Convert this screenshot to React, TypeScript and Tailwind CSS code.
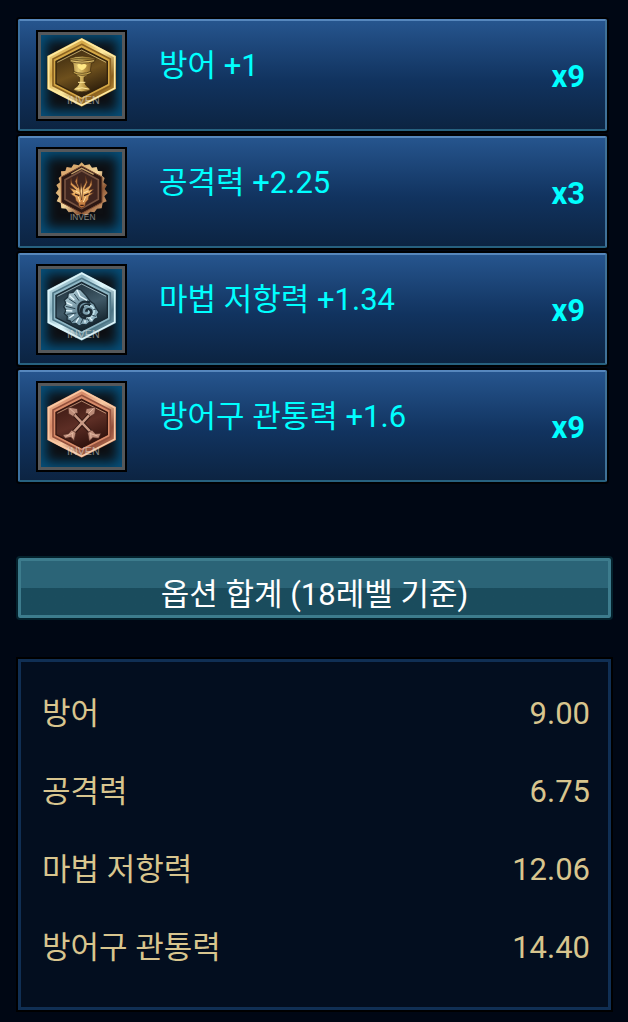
import type { ReactNode } from "react";

type RuneKind = "goblet" | "dragon" | "shell" | "arrows";

interface Rune {
  kind: RuneKind;
  label: string;
  count: number;
}

const RUNES: Rune[] = [
  { kind: "goblet", label: "방어 +1", count: 9 },
  { kind: "dragon", label: "공격력 +2.25", count: 3 },
  { kind: "shell", label: "마법 저항력 +1.34", count: 9 },
  { kind: "arrows", label: "방어구 관통력 +1.6", count: 9 },
];

const TOTALS = [
  { name: "방어", value: "9.00" },
  { name: "공격력", value: "6.75" },
  { name: "마법 저항력", value: "12.06" },
  { name: "방어구 관통력", value: "14.40" },
];

interface HexProps {
  id: string;
  light: string;
  mid: string;
  dark: string;
  core: string;
  coreDark: string;
  children: ReactNode;
}

function Hex({ id, light, mid, dark, core, coreDark, children }: HexProps) {
  return (
    <>
      <defs>
        <linearGradient id={`${id}-rim`} x1="0" y1="0" x2="1" y2="1">
          <stop offset="0" stopColor={light} />
          <stop offset="0.3" stopColor={mid} />
          <stop offset="0.5" stopColor={light} />
          <stop offset="0.75" stopColor={dark} />
          <stop offset="1" stopColor={mid} />
        </linearGradient>
        <linearGradient id={`${id}-core`} x1="0" y1="0" x2="0.4" y2="1">
          <stop offset="0" stopColor={coreDark} />
          <stop offset="0.6" stopColor={core} />
          <stop offset="1" stopColor={coreDark} />
        </linearGradient>
      </defs>
      <path d="M215 84 318 138V237L215 290 112 237V138Z" fill={`url(#${id}-rim)`} />
      <path d="M215 88 314 140V235L215 286 116 235V140Z" fill="none" stroke={light} strokeWidth="5" />
      <path d="M215 103 301 147V227L215 271 129 227V147Z" fill={mid} stroke={dark} strokeWidth="5" />
      <path d="M215 115 292 154V221L215 260 138 221V154Z" fill={`url(#${id}-core)`} stroke={coreDark} strokeWidth="4" />
      <path d="M142 157 215 120 288 157" fill="none" stroke={light} strokeWidth="3" opacity="0.6" />
      {children}
    </>
  );
}

function Goblet() {
  return (
    <Hex id="goblet" light="#ffeaa0" mid="#d5a846" dark="#8b6221" core="#6e501d" coreDark="#33230d">
      <defs>
        <linearGradient id="goblet-cup" x1="0" x2="1">
          <stop offset="0" stopColor="#9b7934" />
          <stop offset="0.35" stopColor="#e5ca74" />
          <stop offset="0.6" stopColor="#ba9543" />
          <stop offset="1" stopColor="#715121" />
        </linearGradient>
      </defs>
      <g fill="url(#goblet-cup)" stroke="#3c290c" strokeWidth="2">
        <path d="M178 145Q216 132 257 145L253 156 244 160 241 183Q236 198 222 202V214Q225 228 239 235L241 241Q216 250 190 241L193 235Q207 229 209 214V202Q197 198 192 184L189 160 180 155Z" />
        <path d="M181 149Q216 158 254 149L253 155Q216 164 181 155Z" fill="#dfc16b" />
        <path d="M190 184Q216 196 243 184V190Q216 202 190 190Z" fill="#cfae54" />
      </g>
      <path d="M185 146Q216 139 250 146Q216 151 185 146Z" fill="#776329" />
      <path d="M215 165Q206 159 202 166Q204 176 215 181Q228 177 230 166Q223 159 215 165Z" fill="#ffe985" />
      <path d="M204 217H226M196 237Q216 230 236 237" fill="none" stroke="#ffe799" strokeWidth="3" />
    </Hex>
  );
}

function Dragon() {
  return (
    <>
      <defs>
        <linearGradient id="dragon-rim" x1="0" y1="0" x2="1" y2="1">
          <stop offset="0" stopColor="#eeb080" />
          <stop offset="0.25" stopColor="#d6a96c" />
          <stop offset="0.5" stopColor="#f4d8a0" />
          <stop offset="0.7" stopColor="#8f5936" />
          <stop offset="1" stopColor="#f0bf8a" />
        </linearGradient>
        <linearGradient id="dragon-face" x1="0" y1="0" x2="0" y2="1">
          <stop offset="0" stopColor="#b86e34" />
          <stop offset="0.5" stopColor="#eeb568" />
          <stop offset="1" stopColor="#b66b34" />
        </linearGradient>
      </defs>
      <path
        d="M215 106 224 115 239 112 246 122 260 120 264 132 277 133 276 146 284 153 280 166 291 174 284 186 293 198 283 208 290 223 278 228 275 244 261 245 253 256 241 254 230 265 215 260 200 265 189 254 176 256 168 245 154 244 152 228 140 223 147 208 137 198 146 186 139 174 150 166 146 153 154 146 153 133 166 132 170 120 184 122 191 112 206 115Z"
        fill="url(#dragon-rim)"
      />
      <path d="M215 117 276 150V226L215 259 154 226V150Z" fill="#2b1713" stroke="#7a4a30" strokeWidth="3" />
      <path d="M215 131 265 158V217L215 245 165 217V158Z" fill="#3f251f" stroke="#765240" strokeWidth="5" />
      <path d="M184 141 215 124 251 142" fill="none" stroke="#c5a16c" strokeWidth="4" />
      <g fill="url(#dragon-face)" stroke="#552e1d" strokeWidth="2">
        <path d="M212 193 202 168 203 147 195 163 204 183 186 168 183 152 181 173 198 189 179 182 190 197 181 200 195 210 198 221 205 228 207 239 215 243 224 239 227 227 235 218 237 207 251 197 239 199 251 186 236 190 246 174 245 156 238 176 224 186 232 166 226 147 227 166Z" />
        <path d="M213 168 218 192 215 219 210 192Z" fill="#ffd28a" />
      </g>
      <path d="M195 201 208 206M236 200 222 206M211 235H221" fill="none" stroke="#381b15" strokeWidth="4" />
      <path d="M197 192 209 199M236 191 221 198M205 210 210 225M227 209 220 225" fill="none" stroke="#ffe0a2" strokeWidth="3" />
    </>
  );
}

function Shell() {
  return (
    <Hex id="shell" light="#dcf5fa" mid="#8eb6c4" dark="#4e7686" core="#405967" coreDark="#172832">
      <defs>
        <linearGradient id="shell-body" x1="0" y1="0" x2="1" y2="1">
          <stop offset="0" stopColor="#c4e0e8" />
          <stop offset="0.5" stopColor="#6d8e9d" />
          <stop offset="1" stopColor="#a5c9d6" />
        </linearGradient>
      </defs>
      <path
        d="M200 133 213 138 228 154 242 173 252 180 259 193 267 204 261 213 264 221 254 226 248 235 238 235 229 243 217 241 207 246 198 239 186 240 181 231 171 228 172 217 163 209 168 199 161 188 168 179 163 168 173 160 175 147 189 145Z"
        fill="url(#shell-body)" stroke="#1d303b" strokeWidth="4"
      />
      <path d="M240 175Q214 168 206 186 201 207 216 220 230 226 243 219" fill="none" stroke="#1b2b35" strokeWidth="7" />
      <path d="M243 183C224 178 211 190 214 205C218 220 242 219 244 205C244 194 229 193 229 203" fill="none" stroke="#1b2b35" strokeWidth="8" />
      <path d="M240 185C248 186 254 195 252 205C249 218 239 224 229 222" fill="none" stroke="#c3e3eb" strokeWidth="5" />
      <path d="M222 187Q232 182 239 189M235 199Q239 206 233 209" fill="none" stroke="#a7cbd7" strokeWidth="4" />
      <path d="M193 150 207 170M176 164 199 179M167 187 196 194M170 211 199 207M185 235 206 217M212 239 219 224M238 233 232 223M258 217 247 214M258 195 250 197" fill="none" stroke="#2b4350" strokeWidth="3" />
      <path d="M201 138 210 157 231 169M179 155 193 168M169 176 187 184M168 200 187 201M178 222 192 212M198 235 206 222M225 236 225 229M247 229 240 223" fill="none" stroke="#e8faff" strokeWidth="4" />
    </Hex>
  );
}

function Arrows() {
  return (
    <Hex id="arrows" light="#f9c9a3" mid="#d88b69" dark="#93513d" core="#5d2e25" coreDark="#35150f">
      <path d="M190 158 258 230M242 158 176 230" stroke="#321712" strokeWidth="13" />
      <path d="M190 158 255 227M242 158 178 227" stroke="#c99a85" strokeWidth="7" />
      <g fill="#bd8c79" stroke="#49241d" strokeWidth="2">
        <path d="M174 138 202 143 204 157 195 157 190 167 176 158Z" />
        <path d="M257 138 229 143 226 157 235 158 240 167 254 158Z" />
        <path d="M185 207 198 215 192 239 183 229 165 232 158 221 175 218Z" />
        <path d="M246 207 233 215 238 241 248 230 266 232 273 217 256 218Z" />
      </g>
      <path d="M180 143 196 158M250 143 235 158M167 226 191 215M239 217 263 225M188 215 188 230M242 215 243 232" fill="none" stroke="#e3b8a1" strokeWidth="3" />
    </Hex>
  );
}

const ARTWORK = { goblet: Goblet, dragon: Dragon, shell: Shell, arrows: Arrows };

function RuneIcon({ kind }: { kind: RuneKind }) {
  const Artwork = ARTWORK[kind];
  const small = kind === "dragon";

  return (
    <div className="shrink-0 border-2 border-black">
      <div className="border-3 border-[#55585b] bg-[#0d0f13]">
        <svg viewBox="93 75 243 243" className="block size-[81px] shadow-[inset_0_0_12px_5px_#064f7a]" aria-hidden="true">
          <Artwork />
          <text
            x={small ? 218 : 220}
            y={small ? 280 : 281}
            textAnchor="middle"
            fontSize={small ? 25 : 32}
            fill="#e4e2dc"
            opacity="0.55"
            className="font-['Liberation_Sans',sans-serif]"
          >
            INVEN
          </text>
        </svg>
      </div>
    </div>
  );
}

function RuneCard({ rune }: { rune: Rune }) {
  return (
    <li className="flex items-start rounded-xs border-2 border-t-[#5687bd] border-r-[#3f7197] border-b-[#27617f] border-l-[#3b70a0] bg-linear-to-b from-[#26558e] via-[#11335f] via-55% to-[#0c2442] pt-[9px] pr-5 pb-2 pl-4 shadow-[0_0_0_2px_#000103]">
      <RuneIcon kind={rune.kind} />
      <p className="ml-8 flex-1 pt-[18px]">{rune.label}</p>
      <strong className="pt-[29px] font-bold">x{rune.count}</strong>
    </li>
  );
}

export default function App() {
  return (
    <main className="min-h-screen bg-[#000714] pt-[19px] pr-[17px] pb-3 pl-[18px] font-[Roboto,'Noto_Sans_CJK_KR',sans-serif] text-[31px] leading-9">
      <ul className="mr-1 flex flex-col gap-[5px] text-[#00ffff]">
        {RUNES.map((rune) => (
          <RuneCard key={rune.kind} rune={rune} />
        ))}
      </ul>

      <h2 className="mt-[76px] rounded-xs border-3 border-[#3d7c8d] bg-linear-to-b from-[#2b6477] from-50% to-[#1a4c5d] to-50% pt-4 pb-[2px] text-center text-white shadow-[0_0_0_2px_#04222d]">
        옵션 합계 (18레벨 기준)
      </h2>

      <section className="mt-[41px] border-3 border-[#102f54] bg-[#030e1f] pt-[13px] pr-[18px] pb-5 pl-[21px] shadow-[0_0_0_2px_#000000]">
        <table className="w-full text-[#d8c58e]">
          <tbody>
            {TOTALS.map((total) => (
              <tr key={total.name} className="h-[78px]">
                <th scope="row" className="text-left font-normal">
                  {total.name}
                </th>
                <td className="text-right">{total.value}</td>
              </tr>
            ))}
          </tbody>
        </table>
      </section>
    </main>
  );
}
